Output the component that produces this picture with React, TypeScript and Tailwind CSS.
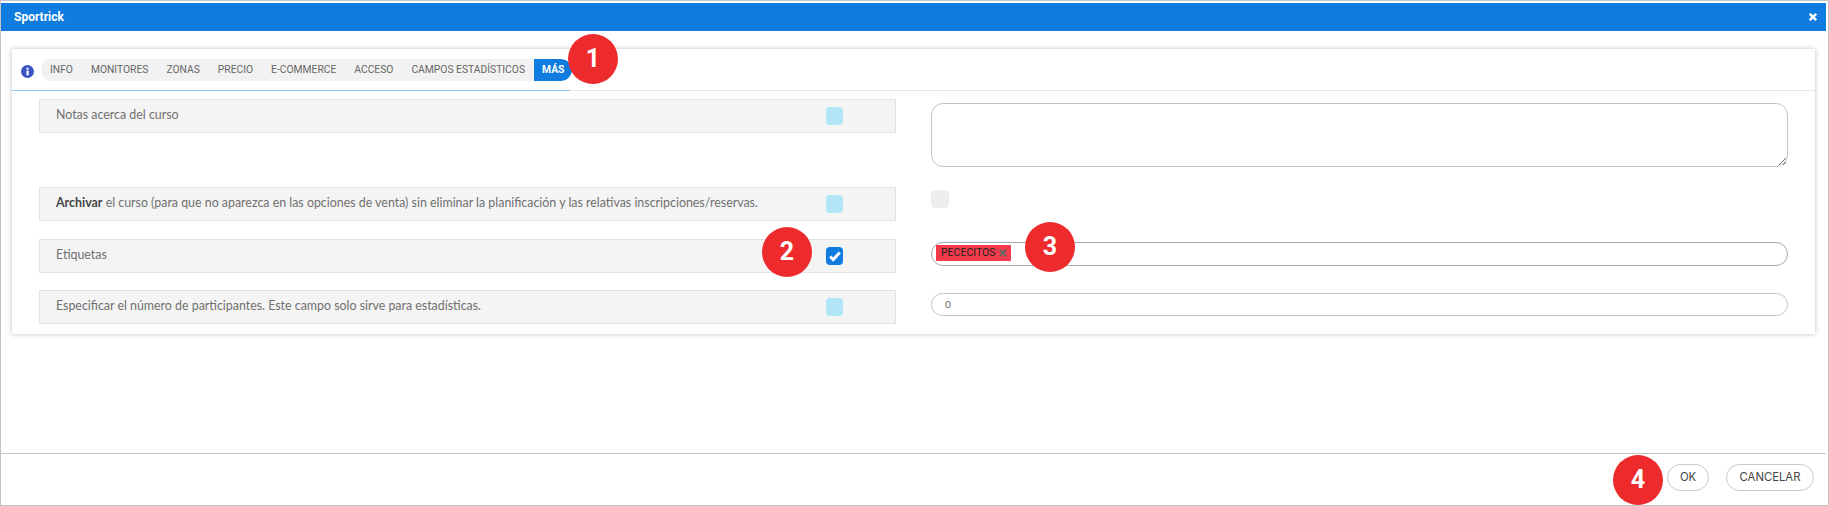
import React from 'react';

const tabs = ['INFO', 'MONITORES', 'ZONAS', 'PRECIO', 'E-COMMERCE', 'ACCESO', 'CAMPOS ESTADÍSTICOS'];

const Callout = ({ n, className }: { n: number; className: string }) => (
  <div className={`absolute flex h-[50px] w-[50px] items-center justify-center rounded-full bg-[#ed2a2c] font-['Roboto',sans-serif] text-[25px] font-bold text-white ${className}`}>
    {n}
  </div>
);

const Check = ({ on }: { on?: boolean }) =>
  on ? (
    <div className="flex h-[18px] w-[17px] items-center justify-center rounded-[4px] bg-[#107cdf]">
      <svg viewBox="0 0 16 16" className="h-[14px] w-[14px]" fill="none" stroke="#fff" strokeWidth="3.4">
        <path d="M2.5 8.5l3.5 3.5 7.5-8" />
      </svg>
    </div>
  ) : (
    <div className="h-[18px] w-[17px] rounded-[4px] bg-[#b0e6f5]" />
  );

const Row = ({ children, on }: { children: React.ReactNode; on?: boolean }) => (
  <div className="flex h-[34px] items-start justify-between border border-[#e3e3e3] bg-[#f4f4f4] pl-[16px] pr-[52px] pt-[7px] text-[12.4px] leading-[16px] text-[#707070]">
    <span>{children}</span>
    <Check on={on} />
  </div>
);

export default function App() {
  return (
    <div className="relative flex h-[506px] w-[1829px] flex-col overflow-hidden border border-[#c4c4c4] bg-white pr-[2px] font-['Lato',sans-serif]">
      <div className="mt-[2px] flex h-[28px] items-center justify-between bg-[#107cdf] pl-[13px] pr-[9px] font-['Roboto',sans-serif] text-[12px] font-bold text-white">
        <span>Sportrick</span>
        <svg viewBox="0 0 10 10" className="h-[8px] w-[8px]" stroke="#fff" strokeWidth="3">
          <path d="M1 1l8 8M9 1l-8 8" />
        </svg>
      </div>

      {/* Card */}
      <div className="ml-[11px] mr-[11px] mt-[18px] h-[285px] bg-white shadow-[0_0_5px_rgba(0,0,0,0.25)]">
        <div className="relative flex h-[42px] items-center border-b border-[#e8e8e8] pl-[9px]">
          <div className="absolute bottom-[-1px] left-0 h-[1px] w-[558px] bg-[#90c8f2]" />
          <svg viewBox="0 0 14 14" className="mr-[7px] mt-[3px] h-[13px] w-[13px]">
            <circle cx="7" cy="7" r="7" fill="#3b53c4" />
            <rect x="5.9" y="6" width="2.4" height="5.2" fill="#fff" />
            <rect x="5.9" y="3" width="2.4" height="2" fill="#fff" />
          </svg>
          <div className="mt-[1px] flex h-[22px] overflow-hidden rounded-full bg-[#f2f2f2] font-['Roboto',sans-serif] text-[10.3px] leading-[22px] text-[#666]">
            {tabs.map((t) => (
              <span key={t} className="px-[9px]">{t}</span>
            ))}
            <span className="rounded-r-full bg-[#107cdf] px-[8px] font-bold text-white">MÁS</span>
          </div>
        </div>

        <div className="grid grid-cols-[857px_857px] gap-x-[35px] pl-[27px] pt-[8px]">
          <Row>Notas acerca del curso</Row>
          <textarea className="mt-[4px] block h-[64px] w-full resize rounded-[12px] border border-[#c4c4c4] bg-white" />

          <div className="col-span-2 h-[20px]" />

          <Row>
            <b className="font-bold text-[#444]">Archivar</b> el curso (para que no aparezca en las opciones de venta) sin eliminar la planificación y las relativas inscripciones/reservas.
          </Row>
          <div className="pt-[3px]">
            <div className="h-[18px] w-[18px] rounded-[4px] bg-[#eeeeee]" />
          </div>

          <div className="col-span-2 h-[18px]" />

          <Row on>Etiquetas</Row>
          <div className="mt-[3px] flex h-[24px] items-start rounded-full border border-[#a8a8a8] bg-white pl-[4px] pt-[2px]">
            <span className="flex h-[16px] items-center gap-[3px] bg-[#f33b4c] pl-[5px] pr-[4px] font-['Roboto',sans-serif] text-[10.5px] text-[#222]">
              PECECITOS
              <svg viewBox="0 0 10 10" className="h-[8px] w-[8px]" stroke="#666" strokeWidth="2.6">
                <path d="M1 1l8 8M9 1l-8 8" />
              </svg>
            </span>
          </div>

          <div className="col-span-2 h-[17px]" />

          <Row>Especificar el número de participantes. Este campo solo sirve para estadísticas.</Row>
          <div className="mt-[3px] flex h-[23px] items-center rounded-full border border-[#c4c4c4] bg-white pl-[13px] text-[10px] text-[#666]">
            0
          </div>
        </div>
      </div>

      {/* Footer */}
      <div className="mt-[119px] flex flex-1 items-start justify-end gap-[17px] border-t border-[#c4c4c4] pr-[12px] pt-[10px] font-['Inter',sans-serif] text-[11.3px] text-[#444]">
        <button className="h-[27px] w-[42px] rounded-full border border-[#c9c9c9] bg-white">OK</button>
        <button className="h-[27px] w-[88px] rounded-full border border-[#c9c9c9] bg-white">CANCELAR</button>
      </div>

      <Callout n={1} className="left-[567px] top-[33px]" />
      <Callout n={2} className="left-[761px] top-[226px]" />
      <Callout n={3} className="left-[1024px] top-[221px]" />
      <Callout n={4} className="left-[1612px] top-[454px]" />
    </div>
  );
}
